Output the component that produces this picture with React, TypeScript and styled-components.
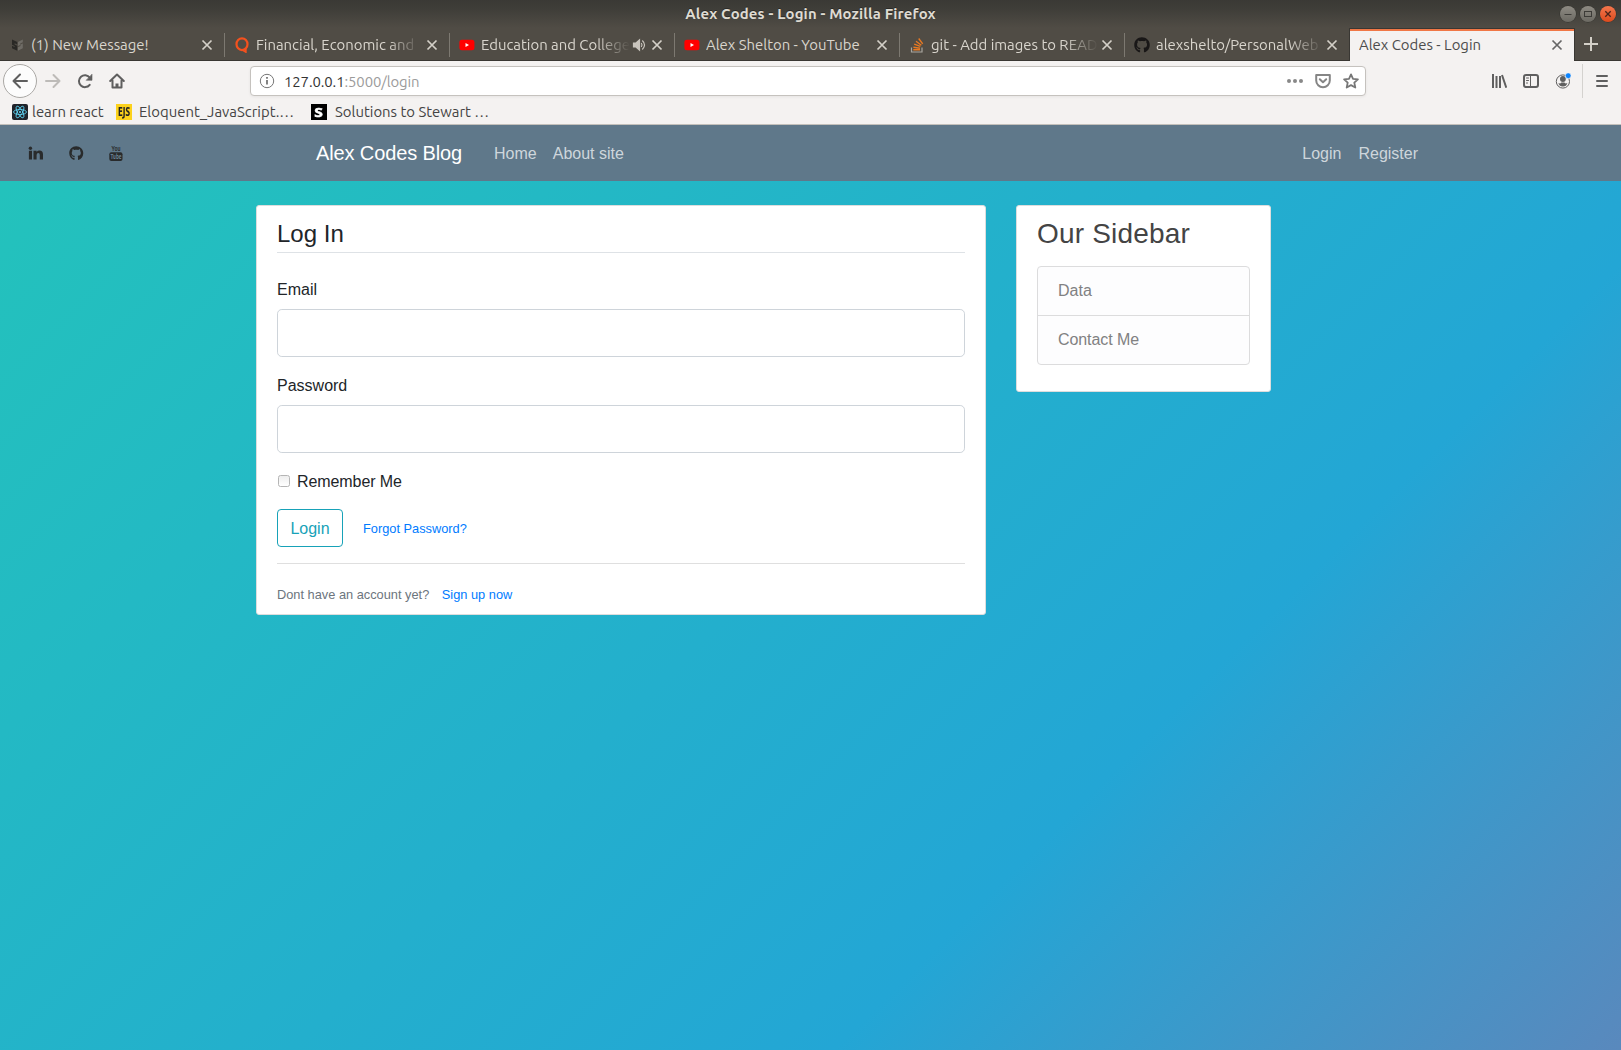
import React from "react";
import styled, { createGlobalStyle } from "styled-components";
import { FaGithub } from "react-icons/fa";

const Global = createGlobalStyle`
  *, *::before, *::after { box-sizing: border-box; }
  body { margin: 0; font-family: "Liberation Sans", Arial, sans-serif; font-size: 16px; line-height: 1.5; color: #212529; overflow: hidden; }
  h2, h3, p { margin: 0; font-weight: 400; }
  a { text-decoration: none; color: inherit; }
`;

const ui = `"Ubuntu", "Noto Sans", "Open Sans", sans-serif`;

const Window = styled.div`
  height: 1050px;
  display: flex;
  flex-direction: column;
  overflow: hidden;
`;

const Chrome = styled.div`
  flex: none;
  height: 125px;
  font-family: ${ui};
  font-size: 14.9px;
  line-height: 20px;
  background: #f4f2f1;
  border-bottom: 1px solid #c3c0bb;
`;

const DarkArea = styled.div`
  height: 61px;
  background: linear-gradient(#3a3935 0, #3e3d38 8px, #504c45 28px, #504c45 100%);
`;

const TitleBar = styled.div`
  height: 28px;
  display: grid;
  grid-template-columns: 1fr auto 1fr;
  align-items: center;
  color: #dfdbd2;
`;

const WindowTitle = styled.div`
  grid-column: 2;
  font-weight: 700;
  font-size: 14.9px;
  letter-spacing: 0.16px;
  text-align: center;
  white-space: nowrap;
  text-shadow: 0 -1px 0 #2b2a27;
`;

const Controls = styled.div`
  justify-self: end;
  display: flex;
  gap: 4px;
  padding-right: 5px;
`;

const Control = styled.span<{ $close?: boolean }>`
  width: 16px;
  height: 16px;
  border-radius: 50%;
  background: ${(p) => (p.$close ? "linear-gradient(#f4774d, #dd4a1d)" : "linear-gradient(#8e8b83, #6b6962)")};
  box-shadow: 0 0 0 0.5px #33322e;
  svg { display: block; }
`;

const Tabs = styled.div`
  display: flex;
  height: 33px;
`;

const Tab = styled.div<{ $active?: boolean; $line?: boolean }>`
  flex: none;
  position: relative;
  width: 225px;
  height: 33px;
  display: flex;
  align-items: center;
  padding: 1px 12px 0 10px;
  color: ${(p) => (p.$active ? "#4c4c4c" : "#d9d5cd")};
  border-bottom: ${(p) => (p.$active ? "0" : "1px solid #393733")};
  ${(p) =>
    p.$active &&
    `width: 226px; margin-left: -1px; background: #f4f2f1; border-left: 1px solid #393733; border-right: 1px solid #393733; box-shadow: inset 0 1px #393733, inset 0 3px #f07746; padding-left: 9px; padding-right: 11px;`}
  &::after {
    content: "";
    display: ${(p) => (p.$line ? "block" : "none")};
    position: absolute;
    right: 0;
    top: 5px;
    height: 24px;
    width: 1px;
    background: #7d7971;
  }
`;

const Favicon = styled.span<{ $pull?: boolean }>`
  flex: none;
  width: 16px;
  height: 16px;
  margin-left: ${(p) => (p.$pull ? -1 : 0)}px;
  margin-right: ${(p) => (p.$pull ? 6 : 5)}px;
  svg { display: block; }
`;

const TabLabel = styled.span<{ $w: number; $fade?: boolean }>`
  flex: none;
  width: ${(p) => p.$w}px;
  overflow: hidden;
  white-space: nowrap;
  ${(p) => p.$fade && "mask-image: linear-gradient(to right, #000 calc(100% - 34px), transparent);"}
`;

const TabEnd = styled.span`
  margin-left: auto;
  display: flex;
  align-items: center;
  gap: 5px;
  svg { display: block; }
`;

const NewTab = styled.div`
  flex: 1;
  border-bottom: 1px solid #393733;
  padding: 9px 0 0 9px;
  svg { display: block; }
`;

const Toolbar = styled.div`
  height: 40px;
  display: flex;
  align-items: center;
  padding-left: 3px;
  svg { display: block; }
`;

const NavButtons = styled.div`
  display: flex;
  align-items: center;
  width: 247px;
  gap: 16px;
`;

const Back = styled.div`
  width: 34px;
  height: 34px;
  border: 1px solid #aaa8a5;
  border-radius: 50%;
  background: #fcfcfc;
  display: grid;
  place-items: center;
  margin-right: -8px;
`;

const UrlBar = styled.div`
  width: 1116px;
  height: 30px;
  border: 1px solid #c5c2be;
  border-radius: 4px;
  background: #fff;
  box-shadow: 0 1px 3px rgba(0, 0, 0, 0.06);
  display: flex;
  align-items: center;
  padding: 0 6px 0 8px;
`;

const Url = styled.span`
  flex: 1;
  margin-left: 9px;
  color: #333;
  letter-spacing: -0.1px;
  padding-top: 1px;
  span { color: #9b9b9b; }
`;

const UrlActions = styled.div`
  display: flex;
  gap: 12px;
`;

const Tools = styled.div`
  margin-left: auto;
  display: flex;
  align-items: center;
`;

const ToolGroup = styled.div`
  display: flex;
  gap: 16px;
  padding-right: 11px;
  border-right: 1px solid #d4d2cf;
  height: 34px;
  align-items: center;
`;

const Menu = styled.div`
  padding: 0 11px 0 11px;
`;

const Bookmarks = styled.div`
  height: 23px;
  display: flex;
  align-items: center;
  padding-left: 12px;
  padding-bottom: 1px;
  color: #444;
`;

const Bookmark = styled.div<{ $w: number; $gap: number }>`
  display: flex;
  align-items: center;
  width: ${(p) => p.$w}px;
  gap: ${(p) => p.$gap}px;
  white-space: nowrap;
  svg { display: block; flex: none; }
`;

const Page = styled.main`
  flex: 1;
  background: linear-gradient(-45deg, #ee7752, #e73c7e, #23a6d5, #23d5ab);
  background-size: 6484px 2040px;
  background-position: -318px -765px;
`;

const NavBar = styled.nav`
  height: 56px;
  background: #5f788a;
  display: flex;
  align-items: center;
  color: #ced6dc;
`;

const Social = styled.div`
  display: flex;
  align-items: center;
  width: 316px;
  padding-left: 28px;
  gap: 25px;
  color: #292b2c;
  svg { display: block; }
`;

const Brand = styled.a`
  font-size: 20px;
  letter-spacing: -0.12px;
  color: #fff;
  margin-right: 32px;
`;

const NavLinks = styled.div<{ $end?: boolean }>`
  display: flex;
  gap: 16px;
  padding-top: 2px;
  ${(p) => p.$end && "margin-left: auto; padding-right: 203px; gap: 17px;"}
`;

const Content = styled.div`
  display: grid;
  grid-template-columns: 730px 255px;
  gap: 30px;
  align-items: start;
  padding: 24px 0 0 256px;
`;

const Card = styled.section`
  background: #fff;
  border: 1px solid #ddd;
  border-radius: 3px;
  padding: 10px 20px;
`;

const LoginCard = styled(Card)`
  height: 410px;
`;

const Legend = styled.h3`
  font-size: 24px;
  line-height: 36px;
  height: 37px;
  border-bottom: 1px solid #dee2e6;
  margin-bottom: 24px;
`;

const Field = styled.label`
  display: block;
  padding-top: 1px;
  margin-bottom: 16px;
`;

const Input = styled.input`
  display: block;
  width: 100%;
  height: 48px;
  margin-top: 7px;
  border: 1px solid #ced4da;
  border-radius: 4.8px;
  padding: 8px 16px;
  font-size: 20px;
`;

const Check = styled.label`
  display: flex;
  align-items: center;
  height: 24px;
  gap: 7px;
  padding-left: 1px;
  letter-spacing: -0.08px;
  span { padding-top: 2px; }
`;

const Box = styled.input`
  appearance: none;
  width: 12px;
  height: 12px;
  margin: 0;
  border: 1px solid #b5b5b5;
  border-radius: 2.5px;
  background: linear-gradient(#eee, #fff);
`;

const Actions = styled.div`
  display: flex;
  align-items: center;
  gap: 20px;
  padding: 16px 0;
  border-bottom: 1px solid #dfdfdf;
`;

const Submit = styled.button`
  width: 66px;
  height: 38px;
  border: 1px solid #17a2b8;
  border-radius: 4px;
  background: transparent;
  color: #17a2b8;
  font: inherit;
  padding: 2px 0 0;
`;

const Small = styled.small`
  font-size: 12.8px;
  color: #6c757d;
  padding-top: 1px;
  a { color: #007bff; }
`;

const SignUp = styled.div`
  padding-top: 18px;
  a { margin-left: 9px; }
`;

const SideCard = styled(Card)`
  height: 187px;
`;

const SideTitle = styled.h2`
  font-size: 28px;
  line-height: 33.6px;
  height: 50px;
  padding-top: 1px;
  letter-spacing: 0.18px;
  color: #444;
`;

const List = styled.div`
  border: 1px solid #dcdcdd;
  border-radius: 4px;
  background: #fdfdfe;
  color: #818182;
`;

const Item = styled.a`
  display: block;
  height: 48px;
  padding: 12px 20px;
  & + & { border-top: 1px solid #dcdcdd; height: 49px; letter-spacing: -0.08px; }
`;

const Close = ({ dark }: { dark?: boolean }) => (
  <svg width="12" height="12" viewBox="0 0 12 12" stroke={dark ? "#666" : "#d4d0c8"} strokeWidth="1.7">
    <path d="M1.5 1.5 10.5 10.5M10.5 1.5 1.5 10.5" />
  </svg>
);

const YouTube = () => (
  <svg width="16" height="16" viewBox="0 0 16 16">
    <rect x="0.4" y="2.7" width="15" height="10.600" rx="2.500" fill="#f00" />
    <path d="M6.5 5.900 10 8 6.5 10.100z" fill="#fff" />
  </svg>
);

const Sketch = () => (
  <svg width="16" height="16" viewBox="0 0 16 16">
    <path d="M2 2.500 7.300 5v2.500L4.600 6.300v1.200L7.300 8.800v5L2 11.300V8.800l2.600 1.200V9L2 7.700z" fill="#292825" />
    <path d="M12.800 2.500 7.900 5v4L10.500 7.700v1.200L7.900 10.300v3.500l4.900-2.500V6.500L10.200 7.800V6.500l2.600-1.200z" fill="#6f6c66" />
  </svg>
);

const OrangeQ = () => (
  <svg width="16" height="16" viewBox="0 0 16 16" fill="none" stroke="#f4511e" strokeWidth="2.200">
    <ellipse cx="7" cy="7.200" rx="5.500" ry="5.900" />
    <path d="M7.500 13 10.800 15V11.500" strokeWidth="1.800" />
  </svg>
);

const StackIcon = () => (
  <svg width="16" height="16" viewBox="0 0 16 16" fill="none">
    <path d="M1.500 10.500v4.500h10.500v-4.500" stroke="#a9a69f" strokeWidth="1.200" />
    <path d="M3.300 12.800h6.700M3.400 10.200l6.600 1M4.200 7.200l6.200 2.200M6 4.300l5.400 3.900M8.700 1.500l4 5.300" stroke="#e87922" strokeWidth="1.400" />
  </svg>
);

const ReactMark = () => (
  <svg width="16" height="16" viewBox="0 0 16 16" fill="none" stroke="#61dafb" strokeWidth=".8">
    <rect width="16" height="16" rx="2" fill="#20232a" stroke="none" />
    <ellipse cx="8" cy="8" rx="6.500" ry="2.500" />
    <ellipse cx="8" cy="8" rx="6.500" ry="2.500" transform="rotate(60 8 8)" />
    <ellipse cx="8" cy="8" rx="6.500" ry="2.500" transform="rotate(120 8 8)" />
    <circle cx="8" cy="8" r="1" fill="#61dafb" stroke="none" />
  </svg>
);

const YouTubeStacked = () => (
  <svg width="14" height="16" viewBox="0 0 14 16" overflow="visible" fill="currentColor" fontFamily='"Ubuntu Condensed", "Ubuntu", "Liberation Sans", sans-serif' fontWeight="700">
    <text x="2.500" y="6" fontSize="8" textLength="9" lengthAdjust="spacingAndGlyphs">You</text>
    <rect x=".3" y="7.200" width="13.200" height="8.700" rx="2" />
    <text x="1.500" y="14.400" fontSize="7.500" fill="#6f8899" textLength="11" lengthAdjust="spacingAndGlyphs">Tube</text>
  </svg>
);

const Mark = styled.span<{ $black?: boolean }>`
  flex: none;
  width: 16px;
  height: 16px;
  background: ${(p) => (p.$black ? "#000" : "#fcd21c")};
  color: ${(p) => (p.$black ? "#fff" : "#222")};
  font: 700 ${(p) => (p.$black ? "13px" : "12.5px")} / 16px "Open Sans", sans-serif;
  display: flex;
  justify-content: center;
  span { display: block; transform: ${(p) => (p.$black ? "scaleX(1.2)" : "scaleX(.66)")}; -webkit-text-stroke: ${(p) => (p.$black ? 0.5 : 0.2)}px currentColor; }
`;

const Glyph = ({ children }: { children: React.ReactNode }) => (
  <svg width="16" height="16" viewBox="0 0 16 16" fill="none" stroke="#5f5f5f" strokeWidth="2" strokeLinecap="round" strokeLinejoin="round">
    {children}
  </svg>
);

export default function App() {
  return (
    <Window>
      <Global />
      <Chrome>
        <DarkArea>
          <TitleBar>
            <WindowTitle>Alex Codes - Login - Mozilla Firefox</WindowTitle>
            <Controls>
              <Control><svg width="16" height="16" stroke="#3c3b37"><path d="M4.500 8.500h7" /></svg></Control>
              <Control><svg width="16" height="16" stroke="#3c3b37" fill="none"><rect x="4.500" y="5.500" width="7" height="5" /></svg></Control>
              <Control $close><svg width="16" height="16" stroke="#4a241a" strokeWidth="1.300"><path d="M5.300 5.300l5.400 5.400M10.700 5.300l-5.400 5.400" /></svg></Control>
            </Controls>
          </TitleBar>
          <Tabs>
            <Tab $line><Favicon><Sketch /></Favicon><TabLabel $w={160}>(1) New Message!</TabLabel><TabEnd><Close /></TabEnd></Tab>
            <Tab $line><Favicon><OrangeQ /></Favicon><TabLabel $w={165} $fade>Financial, Economic and</TabLabel><TabEnd><Close /></TabEnd></Tab>
            <Tab $line>
              <Favicon $pull><YouTube /></Favicon><TabLabel $w={149} $fade>Education and College</TabLabel>
              <TabEnd>
                <svg width="14" height="14" viewBox="0 0 14 14" fill="none" stroke="#c9c5bd" strokeWidth="1.200"><path d="M1.500 5h2.500L7.500 1.800v10.400L4 9H1.500z" fill="#c9c5bd" /><path d="M9.300 5q1.500 2 0 4M10.300 2.500q4.500 4.500 0 9" /></svg>
                <Close />
              </TabEnd>
            </Tab>
            <Tab $line><Favicon $pull><YouTube /></Favicon><TabLabel $w={160}>Alex Shelton - YouTube</TabLabel><TabEnd><Close /></TabEnd></Tab>
            <Tab $line><Favicon><StackIcon /></Favicon><TabLabel $w={167} $fade>git - Add images to READ</TabLabel><TabEnd><Close /></TabEnd></Tab>
            <Tab><Favicon $pull><FaGithub size={16} color="#191717" /></Favicon><TabLabel $w={167} $fade>alexshelto/PersonalWeb</TabLabel><TabEnd><Close /></TabEnd></Tab>
            <Tab $active><TabLabel $w={160}>Alex Codes - Login</TabLabel><TabEnd><Close dark /></TabEnd></Tab>
            <NewTab><svg width="14" height="14" stroke="#d4d0c8" strokeWidth="2"><path d="M7 0v14M0 7h14" /></svg></NewTab>
          </Tabs>
        </DarkArea>
        <Toolbar>
          <NavButtons>
            <Back><Glyph><path d="M15 8H1.500M8 1.500 1.500 8 8 14.500" /></Glyph></Back>
            <svg width="16" height="16" fill="none" stroke="#bdbbb8" strokeWidth="2" strokeLinecap="round" strokeLinejoin="round"><path d="M1 8h13.500M8.500 2 14.500 8l-6 6" /></svg>
            <Glyph><path d="M12.700 11.800A6 6 0 1 1 12.800 4.600" /><path d="M15 1.500v5.800H9.500z" fill="#5f5f5f" strokeWidth=".6" /></Glyph>
            <Glyph><path d="M1.200 8 8 1.500 14.800 8M3.500 7.500V14.500h9V7.500" /><path d="M8 14.500v-4" strokeWidth="3" strokeLinecap="butt" /></Glyph>
          </NavButtons>
          <UrlBar>
            <svg width="16" height="16" fill="none" stroke="#767676"><circle cx="8" cy="8" r="6.700" /><path d="M8 7v4.500M8 4v1.700" strokeWidth="1.800" /></svg>
            <Url>127.0.0.1<span>:5000/login</span></Url>
            <UrlActions>
              <svg width="16" height="16" fill="#888"><circle cx="2" cy="8" r="2" /><circle cx="8" cy="8" r="2" /><circle cx="14" cy="8" r="2" /></svg>
              <svg width="16" height="16" fill="none" stroke="#858585" strokeWidth="2" strokeLinecap="round" strokeLinejoin="round"><path d="M1.200 2h13.600v5.500a6.800 6.800 0 0 1-13.600 0zM4.800 6.300 8 9.300l3.200-3" /></svg>
              <svg width="16" height="16" fill="none" stroke="#777" strokeWidth="1.800" strokeLinejoin="round"><path d="m8 1.400 2 4.400 4.900.5-3.600 3.300 1 4.900L8 12.100l-4.300 2.400 1-4.900L1.100 6.300 6 5.800z" /></svg>
            </UrlActions>
          </UrlBar>
          <Tools>
            <ToolGroup>
              <svg width="16" height="16" stroke="#5f5f5f" strokeWidth="2"><path d="M2 1v14M5.500 3v12M9 3v12M11 2l4.300 12.700" /></svg>
              <Glyph><rect x="1" y="2" width="14" height="12" rx="2" /><path d="M7.500 2v12M3.500 5h2M3.500 7.500h2M3.500 10h1" strokeWidth="1" /></Glyph>
              <svg width="16" height="16" fill="none" stroke="#5f5f5f"><circle cx="7.900" cy="8.500" r="6.600" /><circle cx="7.900" cy="6" r="2.900" fill="#5f5f5f" stroke="none" /><path d="M3.400 10q2 1 3-.5h3q1 1.500 3 .5-1 3.500-4.500 3.500T3.400 10z" fill="#5f5f5f" stroke="none" /><circle cx="13.200" cy="2.700" r="2.900" fill="#0a84ff" stroke="#f4f2f1" strokeWidth=".7" /></svg>
            </ToolGroup>
            <Menu><Glyph><path d="M3 3h10M3 8h10M3 13h10" /></Glyph></Menu>
          </Tools>
        </Toolbar>
        <Bookmarks>
          <Bookmark $w={104} $gap={4}><ReactMark />learn react</Bookmark>
          <Bookmark $w={195} $gap={7}><Mark><span>EJS</span></Mark>Eloquent_JavaScript.…</Bookmark>
          <Bookmark $w={220} $gap={8}><Mark $black><span>S</span></Mark>Solutions to Stewart …</Bookmark>
        </Bookmarks>
      </Chrome>
      <Page>
        <NavBar>
          <Social>
            <svg width="16" height="16" viewBox="0 0 16 16" fill="currentColor"><circle cx="2.400" cy="3.200" r="1.700" /><path d="M.9 5.800h3.100V14.500H.9zM5.500 5.800h3.100v1.200q1-1.400 2.900-1.400 3.500 0 3.500 4V14.500h-3.200V9.900q0-1.900-1.500-1.900-1.700 0-1.700 2V14.500H5.500z" /></svg>
            <FaGithub size={14.5} />
            <YouTubeStacked />
          </Social>
          <Brand>Alex Codes Blog</Brand>
          <NavLinks><a>Home</a><a>About site</a></NavLinks>
          <NavLinks $end><a>Login</a><a>Register</a></NavLinks>
        </NavBar>
        <Content>
          <LoginCard>
            <Legend>Log In</Legend>
            <Field>Email<Input /></Field>
            <Field>Password<Input type="password" /></Field>
            <Check><Box type="checkbox" /><span>Remember Me</span></Check>
            <Actions><Submit>Login</Submit><Small><a>Forgot Password?</a></Small></Actions>
            <SignUp><Small>Dont have an account yet? <a>Sign up now</a></Small></SignUp>
          </LoginCard>
          <SideCard>
            <SideTitle>Our Sidebar</SideTitle>
            <List><Item>Data</Item><Item>Contact Me</Item></List>
          </SideCard>
        </Content>
      </Page>
    </Window>
  );
}
